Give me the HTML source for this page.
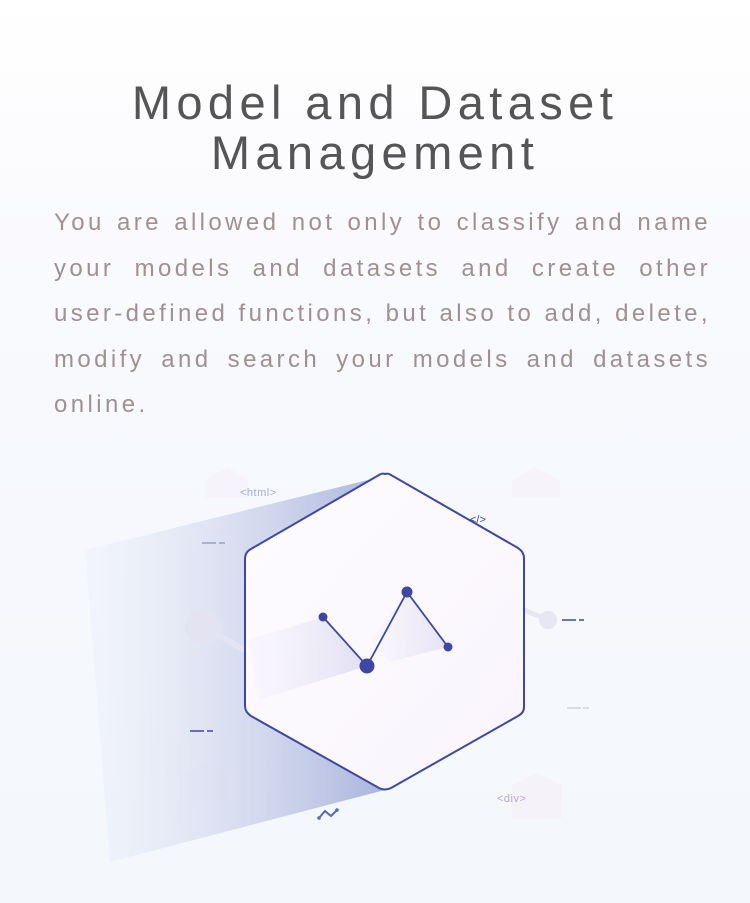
<!DOCTYPE html>
<html><head><meta charset="utf-8"><style>
html,body{margin:0;padding:0}
body{width:750px;height:903px;overflow:hidden;position:relative;font-family:"Liberation Sans",sans-serif;background:linear-gradient(#ffffff 0px,#fbfbfe 180px,#f7f9fd 380px,#f4f7fc 903px)}
h1{position:absolute;top:78px;left:0;width:750px;margin:0;text-align:center;font-size:47px;line-height:50px;font-weight:normal;letter-spacing:5.4px;color:#555}
p{position:absolute;top:200px;left:54px;width:657px;margin:0;font-size:24px;line-height:45.5px;letter-spacing:3.4px;color:#a09090;text-align:justify}
svg{position:absolute;left:0;top:0}
</style></head><body>
<h1>Model and Dataset<br>Management</h1>
<p>You are allowed not only to classify and name your models and datasets and create other user-defined functions, but also to add, delete, modify and search your models and datasets online.</p>
<svg width="750" height="903" viewBox="0 0 750 903">
<defs>
<linearGradient id="sh" x1="0" y1="0" x2="1" y2="0">
<stop offset="0" stop-color="#e9edf8" stop-opacity="0.3"/>
<stop offset="1" stop-color="#aab4dc"/>
</linearGradient>
<linearGradient id="hx" x1="0" y1="0" x2="1" y2="1">
<stop offset="0" stop-color="#fdfcff"/>
<stop offset="1" stop-color="#f9f4fc"/>
</linearGradient>
<linearGradient id="in" x1="0" y1="0" x2="1" y2="0">
<stop offset="0" stop-color="#eceaf7" stop-opacity="0.3"/>
<stop offset="1" stop-color="#cfcdeb"/>
</linearGradient>
</defs>
<g fill="#f6eef6" opacity="0.45">
<polygon points="205,480 228,467 248,480 248,498 205,498"/>
<polygon points="512,480 535,467 560,480 560,497 512,497"/>
<polygon points="180,775 205,762 228,775 228,800 180,800"/>
<polygon points="512,785 537,773 562,785 562,818 512,818"/>
</g>
<polygon points="380,477 85,550 110,862 385,790" fill="url(#sh)"/>
<circle cx="203" cy="627" r="18" fill="#e4e3f2"/>
<line x1="203" y1="627" x2="245" y2="650" stroke="#e4e3f2" stroke-width="6"/>
<line x1="524" y1="610" x2="548" y2="620" stroke="#e7e6f3" stroke-width="5"/>
<circle cx="548" cy="620" r="9" fill="#e7e6f3"/>
<path d="M385,474 Q388,473 391,475 L518,548 Q524,552 524,558 L524,707 Q524,713 518,716 L391,788 Q385,791 379,788 L251,716 Q245,712 245,706 L245,559 Q245,552 251,549 L379,475 Q382,473 385,474 Z" fill="url(#hx)" stroke="#3e48a2" stroke-width="2"/>
<polygon points="323,617 367,666 258,700 248,640" fill="url(#in)" opacity="0.6"/>
<polygon points="407,592 447,647 390,662 370,640" fill="url(#in)" opacity="0.5"/>
<polyline points="323,617 367,666 407,592 448,647" fill="none" stroke="#3e48a2" stroke-width="1.8"/>
<circle cx="323" cy="617" r="4.5" fill="#3e48a2"/>
<circle cx="367" cy="666" r="7.5" fill="#3e48a2"/>
<circle cx="407" cy="592" r="5.5" fill="#3e48a2"/>
<circle cx="448" cy="647" r="4.5" fill="#3e48a2"/>
<text x="240" y="496" font-size="11" fill="#a5a9d8" font-family="Liberation Sans" letter-spacing="0.5">&lt;html&gt;</text>
<text x="470" y="523" font-size="11" fill="#3e48a2" font-family="Liberation Sans">&lt;/&gt;</text>
<text x="497" y="802" font-size="11" fill="#b9a3e0" font-family="Liberation Sans" letter-spacing="0.5">&lt;div&gt;</text>
<g stroke-width="1.5">
<path d="M202,543h14M219,543h6" stroke="#9aa0c4"/>
<path d="M562,620h14M579,620h5" stroke="#3e48a2"/>
<path d="M567,708h14M583,708h6" stroke="#d0d3e6"/>
<path d="M190,731h14M207,731h6" stroke="#3e48a2"/>
</g>
<polyline points="319,818 325,811 331,816 337,810" fill="none" stroke="#5d66b5" stroke-width="2"/>
<circle cx="319" cy="818" r="1.8" fill="#5d66b5"/><circle cx="337" cy="810" r="1.8" fill="#5d66b5"/>
</svg>
</body></html>
